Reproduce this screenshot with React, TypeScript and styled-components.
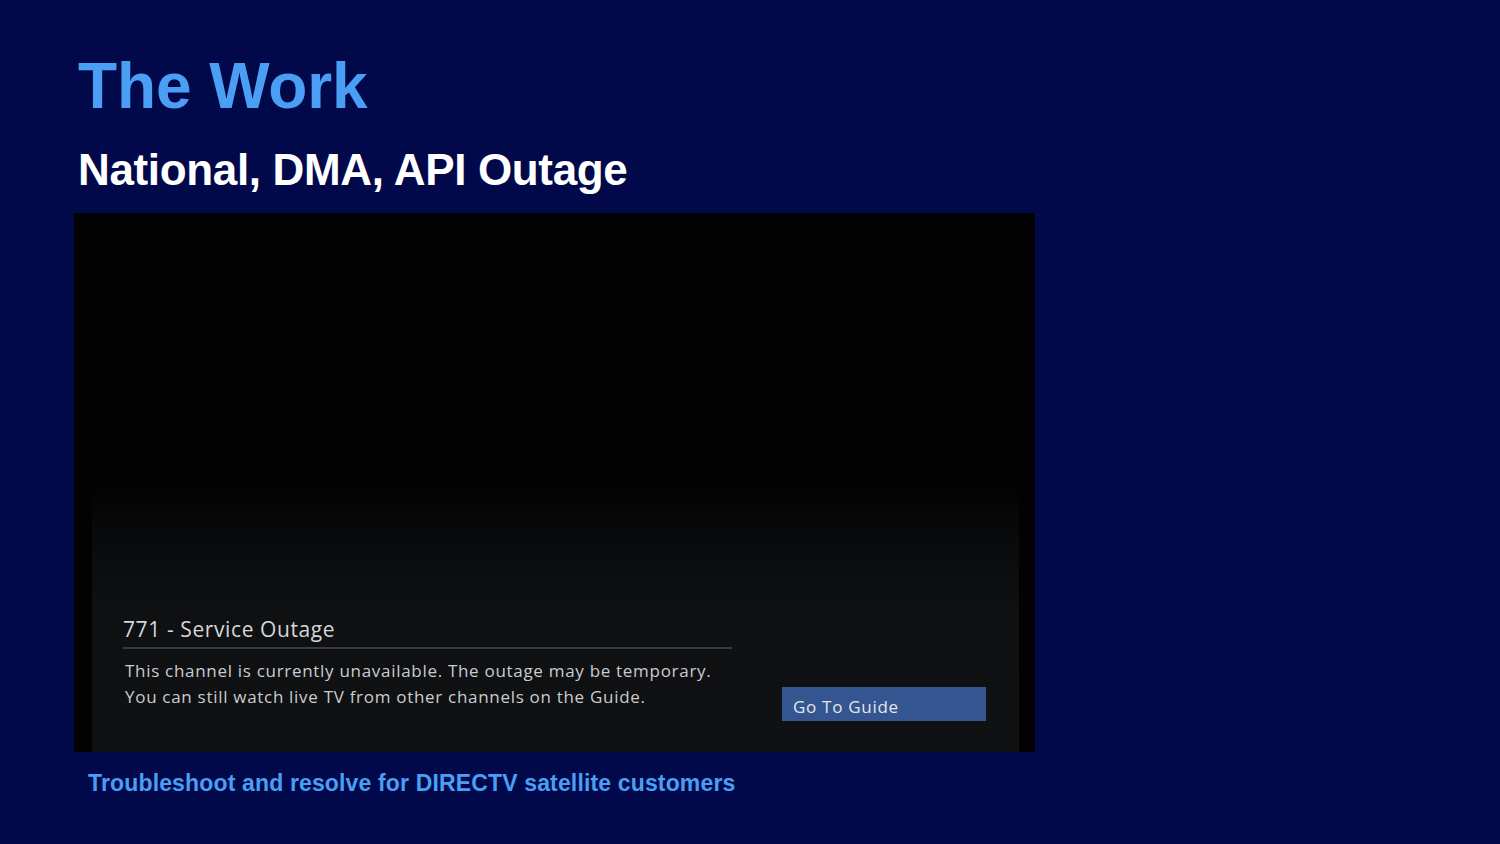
import React from "react";
import styled, { createGlobalStyle } from "styled-components";

const GlobalStyle = createGlobalStyle`
  html, body {
    margin: 0;
    padding: 0;
    background: #01094a;
  }
  body {
    font-family: "Liberation Sans", Arial, sans-serif;
  }
`;

const Page = styled.main`
  width: 1500px;
  height: 844px;
  box-sizing: border-box;
  background: #01094a;
  padding: 54px 0 0 74px;
  display: flex;
  flex-direction: column;
  align-items: flex-start;
`;

const Title = styled.h1`
  margin: 0 0 0 4px;
  font-family: "Liberation Sans", Arial, sans-serif;
  font-weight: 700;
  font-size: 64px;
  line-height: 64px;
  letter-spacing: -0.1px;
  color: #4a9ff5;
`;

const Subtitle = styled.h2`
  margin: 30px 0 0 4px;
  font-family: "Liberation Sans", Arial, sans-serif;
  font-weight: 700;
  font-size: 44px;
  line-height: 44px;
  letter-spacing: -0.35px;
  color: #ffffff;
`;

const Frame = styled.section`
  margin-top: 21px;
  width: 961px;
  height: 539px;
  box-sizing: border-box;
  background: #020202;
  padding: 0 16px 0 18px;
  display: flex;
`;

const Panel = styled.div`
  flex: 1;
  background: linear-gradient(
    to bottom,
    #020202 0%,
    #020202 50%,
    #0a0b0d 62%,
    #0f1012 74%,
    #101113 100%
  );
  display: flex;
  flex-direction: column;
  justify-content: flex-end;
  padding: 0 33px 31px 31px;
`;

const Row = styled.div`
  display: flex;
  align-items: flex-end;
  justify-content: space-between;
`;

const Message = styled.div`
  width: 609px;
  display: flex;
  flex-direction: column;
  padding-bottom: 11px;
  font-family: "Open Sans", "DejaVu Sans", sans-serif;
  color: #cfd0d2;
`;

const Heading = styled.div`
  font-size: 21px;
  line-height: 26px;
  letter-spacing: 0.6px;
  padding-bottom: 5px;
  border-bottom: 2px solid #3a3b3e;
  color: #d6d7d9;
`;

const Body = styled.p`
  margin: 9px 0 0 2px;
  font-size: 17px;
  line-height: 26px;
  letter-spacing: 0.7px;
  color: #cbcccf;
`;

const GuideButton = styled.button`
  width: 204px;
  height: 34px;
  border: none;
  border-radius: 0;
  background: #34558f;
  color: #e3e6ee;
  font-family: "Open Sans", "DejaVu Sans", sans-serif;
  font-size: 17px;
  letter-spacing: 0.7px;
  text-align: left;
  padding: 4px 0 0 11px;
  cursor: pointer;
`;

const Caption = styled.p`
  margin: 20px 0 0 14px;
  font-family: "Liberation Sans", Arial, sans-serif;
  font-weight: 700;
  font-size: 23px;
  line-height: 23px;
  letter-spacing: 0.15px;
  color: #4a9ff5;
`;

export default function App() {
  return (
    <>
      <GlobalStyle />
      <Page>
        <Title>The Work</Title>
        <Subtitle>National, DMA, API Outage</Subtitle>
        <Frame>
          <Panel>
            <Row>
              <Message>
                <Heading>771 - Service Outage</Heading>
                <Body>
                  This channel is currently unavailable. The outage may be temporary.
                  <br />
                  You can still watch live TV from other channels on the Guide.
                </Body>
              </Message>
              <GuideButton>Go To Guide</GuideButton>
            </Row>
          </Panel>
        </Frame>
        <Caption>Troubleshoot and resolve for DIRECTV satellite customers</Caption>
      </Page>
    </>
  );
}
